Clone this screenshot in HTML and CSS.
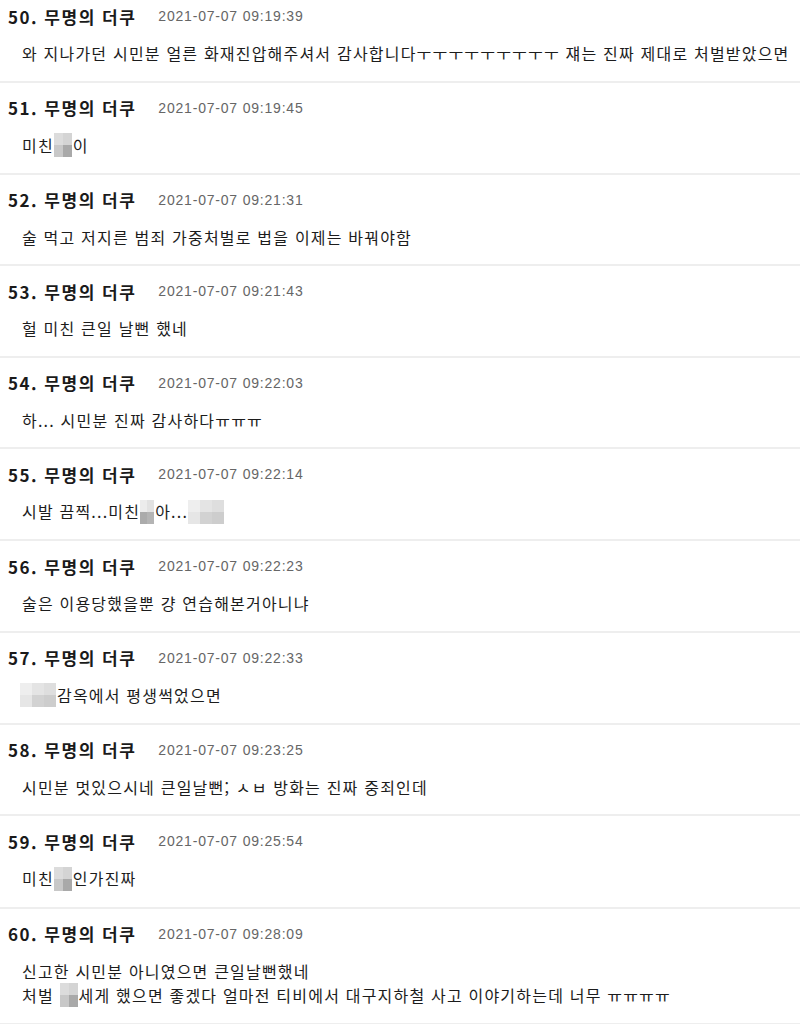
FILE: index.html
```html
<!DOCTYPE html>
<html lang="ko">
<head>
<meta charset="utf-8">
<link rel="stylesheet" href="styles.css">
</head>
<body>
<div class="list">
  <div class="comment">
    <div class="head"><span class="name">50. 무명의 더쿠</span><span class="date">2021-07-07 09:19:39</span></div>
    <div class="text">와 지나가던 시민분 얼른 화재진압해주셔서 감사합니다ㅜㅜㅜㅜㅜㅜㅜㅜㅜ 쟤는 진짜 제대로 처벌받았으면</div>
  </div>
  <div class="comment">
    <div class="head"><span class="name">51. 무명의 더쿠</span><span class="date">2021-07-07 09:19:45</span></div>
    <div class="text">미친<span class="blur b-sm"><i></i><i></i><i></i><i></i></span>이</div>
  </div>
  <div class="comment">
    <div class="head"><span class="name">52. 무명의 더쿠</span><span class="date">2021-07-07 09:21:31</span></div>
    <div class="text">술 먹고 저지른 범죄 가중처벌로 법을 이제는 바꿔야함</div>
  </div>
  <div class="comment">
    <div class="head"><span class="name">53. 무명의 더쿠</span><span class="date">2021-07-07 09:21:43</span></div>
    <div class="text">헐 미친 큰일 날뻔 했네</div>
  </div>
  <div class="comment">
    <div class="head"><span class="name">54. 무명의 더쿠</span><span class="date">2021-07-07 09:22:03</span></div>
    <div class="text">하... 시민분 진짜 감사하다ㅠㅠㅠ</div>
  </div>
  <div class="comment">
    <div class="head"><span class="name">55. 무명의 더쿠</span><span class="date">2021-07-07 09:22:14</span></div>
    <div class="text">시발 끔찍...미친<span class="blur b-xs"><i></i><i></i><i></i><i></i></span>아...<span class="blur b-lg"><i></i><i></i><i></i><i></i><i></i><i></i></span></div>
  </div>
  <div class="comment">
    <div class="head"><span class="name">56. 무명의 더쿠</span><span class="date">2021-07-07 09:22:23</span></div>
    <div class="text">술은 이용당했을뿐 걍 연습해본거아니냐</div>
  </div>
  <div class="comment">
    <div class="head"><span class="name">57. 무명의 더쿠</span><span class="date">2021-07-07 09:22:33</span></div>
    <div class="text"><span class="blur b-lg b-lead"><i></i><i></i><i></i><i></i><i></i><i></i></span>감옥에서 평생썩었으면</div>
  </div>
  <div class="comment">
    <div class="head"><span class="name">58. 무명의 더쿠</span><span class="date">2021-07-07 09:23:25</span></div>
    <div class="text">시민분 멋있으시네 큰일날뻔; ㅅㅂ 방화는 진짜 중죄인데</div>
  </div>
  <div class="comment">
    <div class="head"><span class="name">59. 무명의 더쿠</span><span class="date">2021-07-07 09:25:54</span></div>
    <div class="text">미친<span class="blur b-sm"><i></i><i></i><i></i><i></i></span>인가진짜</div>
  </div>
  <div class="comment">
    <div class="head"><span class="name">60. 무명의 더쿠</span><span class="date">2021-07-07 09:28:09</span></div>
    <div class="text">신고한 시민분 아니였으면 큰일날뻔했네<br>처벌 <span class="blur b-sm"><i></i><i></i><i></i><i></i></span>세게 했으면 좋겠다 얼마전 티비에서 대구지하철 사고 이야기하는데 너무 ㅠㅠㅠㅠ</div>
  </div>
</div>
</body>
</html>
```

FILE: styles.css
```css
html, body {
  margin: 0;
  padding: 0;
  background: #ffffff;
}

body {
  width: 800px;
  height: 1024px;
  overflow: hidden;
  font-family: "Noto Sans CJK KR", "Noto Sans", sans-serif;
  color: #1c1c1c;
}

.list {
  display: flex;
  flex-direction: column;
}

.comment {
  padding: 13px 0 15.5px 8px;
  border-bottom: 2px solid #eeeeee;
}

.comment:first-child {
  padding-top: 4px;
}

.head {
  display: flex;
  align-items: center;
  height: 24px;
  gap: 22px;
  white-space: nowrap;
}

.name {
  font-size: 17px;
  font-weight: 700;
  color: #1a1a1a;
  letter-spacing: 1.5px;
}

.date {
  font-family: "Liberation Sans", Arial, sans-serif;
  font-size: 14px;
  color: #666666;
  letter-spacing: 0.8px;
}

.text {
  margin-top: 13px;
  padding-left: 14px;
  font-size: 16px;
  line-height: 24px;
  letter-spacing: 1.2px;
  white-space: nowrap;
  overflow: hidden;
}

.blur {
  display: inline-grid;
  vertical-align: middle;
  grid-template-columns: 1fr 1fr;
  grid-auto-rows: 1fr;
  height: 24px;
  margin-top: -4px;
  margin-right: 1px;
}

.blur i {
  display: block;
}

.b-sm {
  width: 18px;
}

.b-sm i:nth-child(1) { background: #dcdcdc; }
.b-sm i:nth-child(2) { background: #d4d4d4; }
.b-sm i:nth-child(3) { background: #c8c8c8; }
.b-sm i:nth-child(4) { background: #a9a9a9; }

.b-xs {
  width: 14px;
}

.b-xs i:nth-child(1) { background: #ececec; }
.b-xs i:nth-child(2) { background: #e2e2e2; }
.b-xs i:nth-child(3) { background: #ababab; }
.b-xs i:nth-child(4) { background: #b4b4b4; }

.b-lg {
  width: 36px;
  grid-template-columns: 1fr 1fr 1fr;
}

.b-lg i:nth-child(1) { background: #eeeeee; }
.b-lg i:nth-child(2) { background: #e4e4e4; }
.b-lg i:nth-child(3) { background: #dedede; }
.b-lg i:nth-child(4) { background: #e6e6e6; }
.b-lg i:nth-child(5) { background: #d2d2d2; }
.b-lg i:nth-child(6) { background: #cdcdcd; }

.b-lead {
  margin-left: -2px;
}
```
